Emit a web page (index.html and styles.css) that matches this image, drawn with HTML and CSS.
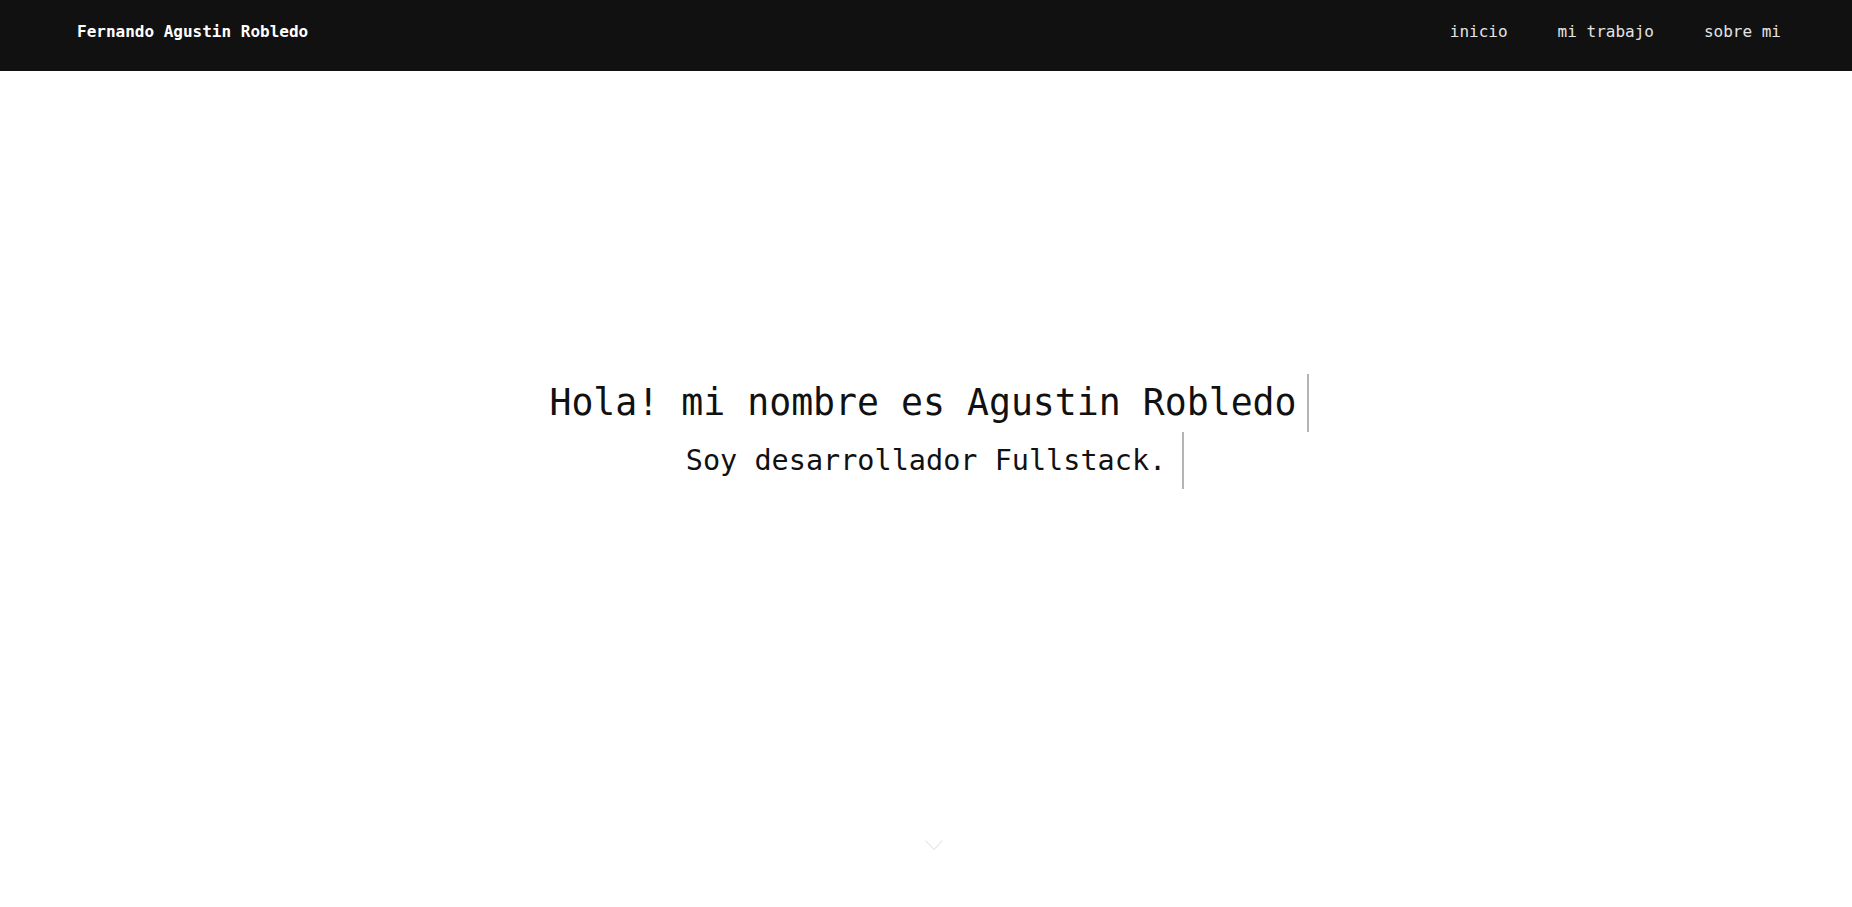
FILE: index.html
```html
<!DOCTYPE html>
<html lang="es">
<head>
<meta charset="utf-8">
<title>Fernando Agustin Robledo</title>
<link rel="stylesheet" href="styles.css">
</head>
<body>
<header class="topbar">
  <a class="brand" href="#">Fernando Agustin Robledo</a>
  <nav class="nav">
    <a href="#">inicio</a>
    <a href="#">mi trabajo</a>
    <a href="#">sobre mi</a>
  </nav>
</header>
<main class="hero">
  <div class="line line-title"><span class="typed">Hola! mi nombre es Agustin Robledo</span><span class="cursor cursor-title"></span></div>
  <div class="line line-sub"><span class="typed">Soy desarrollador Fullstack.</span><span class="cursor cursor-sub"></span></div>
  <svg class="scroll-hint" width="18" height="11" viewBox="0 0 18 11" aria-hidden="true">
    <path d="M1 1 L9 9.5 L17 1" fill="none" stroke="#ececec" stroke-width="1.6" stroke-linecap="round" stroke-linejoin="round"/>
  </svg>
</main>
</body>
</html>
```
FILE: styles.css
```css
* { box-sizing: border-box; }

html, body {
  margin: 0;
  padding: 0;
  height: 100%;
  overflow: hidden;
  background: #ffffff;
  font-family: "DejaVu Sans Mono", "Liberation Mono", monospace;
}

.topbar {
  height: 71px;
  background: #111111;
  display: flex;
  justify-content: space-between;
  align-items: flex-start;
  padding: 22px 71px 0 77px;
}

.brand {
  color: #ffffff;
  font-weight: bold;
  font-size: 16px;
  text-decoration: none;
}

.nav {
  display: flex;
  gap: 50px;
}

.nav a {
  color: #e4e4e4;
  font-size: 16px;
  text-decoration: none;
}

.hero {
  position: relative;
  height: 836px;
  display: flex;
  flex-direction: column;
  align-items: center;
  padding-top: 303px;
  color: #111111;
}

.line {
  display: flex;
  align-items: stretch;
  white-space: pre;
}

.line-title {
  font-size: 36.5px;
  line-height: 58px;
}

.line-sub {
  font-size: 28.5px;
  line-height: 57px;
}

.cursor {
  display: inline-block;
  width: 2px;
  background: #b4b4b4;
}

.cursor-title {
  margin-left: 10px;
  margin-right: -6px;
}

.cursor-sub {
  margin-left: 16px;
  margin-right: -18px;
}

.scroll-hint {
  position: absolute;
  left: 925px;
  top: 769px;
}
```
